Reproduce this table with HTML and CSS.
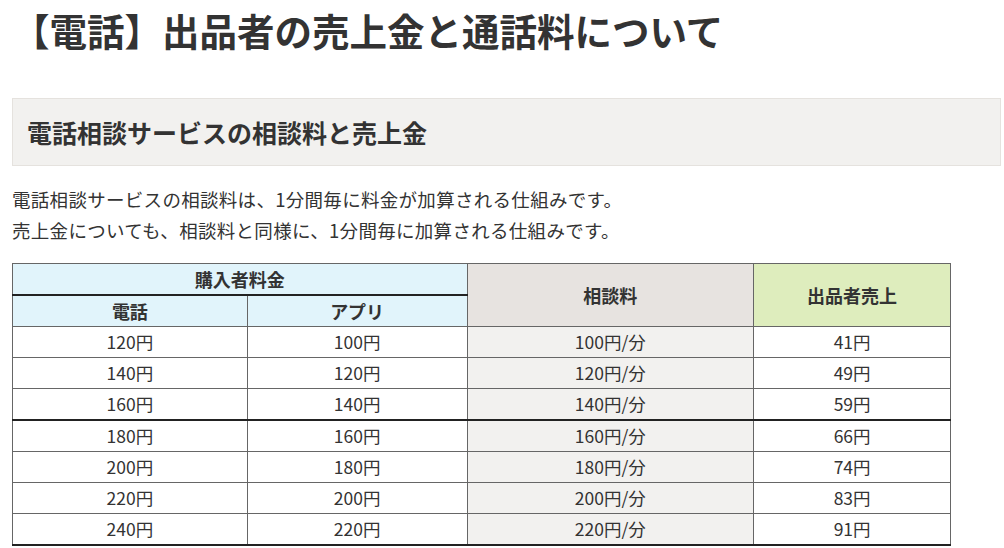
FILE: index.html
```html
<!DOCTYPE html>
<html lang="ja">
<head>
    <meta charset="UTF-8">
    <meta name="viewport" content="width=device-width, initial-scale=1.0">
    <title>【電話】出品者の売上金と通話料について</title>
    <link rel="stylesheet" href="styles.css">
</head>
<body>
    <div class="article">
        <h1 class="page-title">【電話】出品者の売上金と通話料について</h1>

        <h2 class="section-title">電話相談サービスの相談料と売上金</h2>

        <p class="lead">
            電話相談サービスの相談料は、1分間毎に料金が加算される仕組みです。<br>
            売上金についても、相談料と同様に、1分間毎に加算される仕組みです。
        </p>

        <table class="price-table">
            <colgroup>
                <col class="col-phone">
                <col class="col-app">
                <col class="col-fee">
                <col class="col-sales">
            </colgroup>
            <thead>
                <tr>
                    <th colspan="2" class="head-buyer group-head">購入者料金</th>
                    <th rowspan="2" class="head-fee">相談料</th>
                    <th rowspan="2" class="head-sales">出品者売上</th>
                </tr>
                <tr>
                    <th class="head-buyer">電話</th>
                    <th class="head-buyer">アプリ</th>
                </tr>
            </thead>
            <tbody>
                <tr><td>120円</td><td>100円</td><td class="fee">100円/分</td><td>41円</td></tr>
                <tr><td>140円</td><td>120円</td><td class="fee">120円/分</td><td>49円</td></tr>
                <tr class="divider"><td>160円</td><td>140円</td><td class="fee">140円/分</td><td>59円</td></tr>
                <tr><td>180円</td><td>160円</td><td class="fee">160円/分</td><td>66円</td></tr>
                <tr><td>200円</td><td>180円</td><td class="fee">180円/分</td><td>74円</td></tr>
                <tr><td>220円</td><td>200円</td><td class="fee">200円/分</td><td>83円</td></tr>
                <tr class="divider"><td>240円</td><td>220円</td><td class="fee">220円/分</td><td>91円</td></tr>
            </tbody>
        </table>
    </div>
</body>
</html>
```

FILE: styles.css
```css
body {
    font-family: "Noto Sans CJK JP", "Noto Sans", sans-serif;
    color: #333;
    background-color: #fff;
    margin: 0;
    padding: 0;
}
.article {
    margin: 0 3px 0 12px;
}
.page-title {
    margin: 0;
    padding-top: 4px;
    font-size: 37.5px;
    line-height: 52px;
    font-weight: bold;
}
.section-title {
    margin: 42px 0 0;
    padding: 16px 14px;
    font-size: 25px;
    line-height: 34px;
    font-weight: bold;
    background-color: #f2f1ef;
    border: 1px solid #e5e2de;
}
.lead {
    margin: 18px 0 17px;
    font-size: 18.5px;
    letter-spacing: 0.3px;
    line-height: 31px;
}
.price-table {
    border-collapse: collapse;
    width: 939px;
    font-size: 17.5px;
    text-align: center;
}
.col-phone { width: 235px; }
.col-app { width: 220px; }
.col-fee { width: 287px; }
.col-sales { width: 197px; }
.price-table th,
.price-table td {
    border: 1px solid #666;
    padding: 0;
    line-height: 30px;
}
.price-table th {
    font-size: 18px;
    font-weight: bold;
}
.head-buyer {
    background-color: #e1f4fb;
}
.group-head {
    border-bottom: 2px solid #222 !important;
}
.head-fee {
    background-color: #e7e3e0;
}
.head-sales {
    background-color: #deedbd;
}
.price-table td.fee {
    background-color: #f2f1ef;
}
.price-table tr.divider td {
    border-bottom: 2px solid #222;
}
```
